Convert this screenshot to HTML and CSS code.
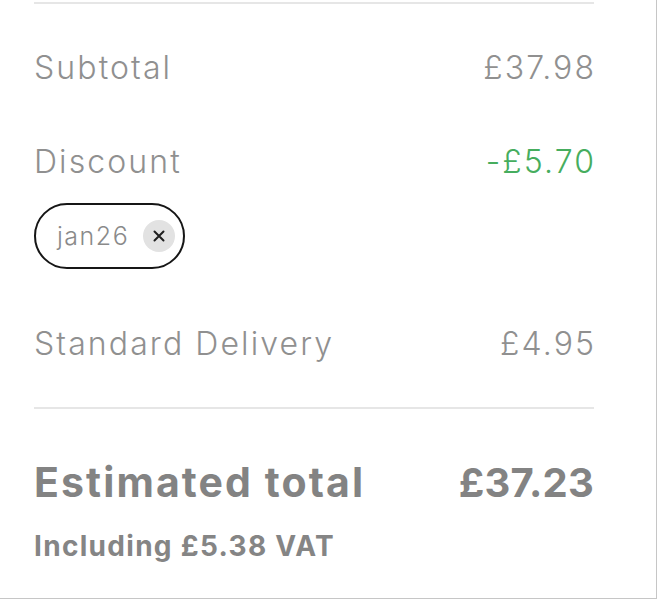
FILE: index.html
```html
<!DOCTYPE html>
<html lang="en">
<head>
<meta charset="utf-8">
<title>Order summary</title>
<link rel="stylesheet" href="styles.css">
</head>
<body>
<section class="panel">
  <div class="rule rule-top"></div>
  <div class="row row-subtotal">
    <span class="label">Subtotal</span>
    <span class="value">£37.98</span>
  </div>
  <div class="row row-discount">
    <span class="label">Discount</span>
    <span class="value value-green">-£5.70</span>
  </div>
  <div class="codes">
    <span class="pill">
      <span class="pill-text">jan26</span>
      <span class="pill-close" aria-label="Remove code">
        <svg width="12" height="12" viewBox="0 0 12 12"><path d="M1.5 1.5 L10.5 10.5 M10.5 1.5 L1.5 10.5" stroke="#1f1f1f" stroke-width="2" stroke-linecap="round"/></svg>
      </span>
    </span>
  </div>
  <div class="row row-delivery">
    <span class="label">Standard Delivery</span>
    <span class="value">£4.95</span>
  </div>
  <div class="rule rule-mid"></div>
  <div class="row row-total">
    <span class="total-label">Estimated total</span>
    <span class="total-value">£37.23</span>
  </div>
  <div class="vat">Including £5.38 VAT</div>
</section>
</body>
</html>
```
FILE: styles.css
```css
html, body {
  margin: 0;
  padding: 0;
  background: #ffffff;
}
body {
  font-family: Inter, "Noto Sans", "DejaVu Sans", sans-serif;
  color: #8e8e8e;
}
.panel {
  width: 560px;
  height: 598px;
  padding: 0 62px 0 34px;
  border-right: 1px solid #c6c6c6;
  border-bottom: 1px solid #c6c6c6;
  display: flex;
  flex-direction: column;
}
.rule {
  height: 2px;
  background: #e6e6e6;
  flex: none;
}
.rule-top { margin-top: 2px; }
.row {
  display: flex;
  justify-content: space-between;
  align-items: center;
  height: 40px;
  font-size: 32px;
  font-weight: 350;
  letter-spacing: 2.1px;
  color: #909090;
  flex: none;
}
.value { margin-right: -2.1px; }
.row-subtotal { margin-top: 43px; }
.row-discount { margin-top: 54px; }
.row-delivery { margin-top: 54px; }
.value-green { color: #46ad5e; }
.codes {
  margin-top: 22px;
  display: flex;
}
.pill {
  display: inline-flex;
  align-items: center;
  height: 62px;
  padding: 0 8px 0 21px;
  border: 2px solid #161616;
  border-radius: 34px;
}
.pill-text {
  font-size: 25px;
  font-weight: 350;
  letter-spacing: 1.5px;
  color: #8a8a8a;
  margin-right: 14px;
}
.pill-close {
  width: 32px;
  height: 32px;
  border-radius: 50%;
  background: #e2e2e2;
  display: flex;
  align-items: center;
  justify-content: center;
}
.rule-mid { margin-top: 44px; }
.row-total {
  margin-top: 48px;
  height: 50px;
  font-size: 41px;
  font-weight: 700;
  color: #838383;
  letter-spacing: 2.1px;
}
.total-value {
  font-size: 40px;
  letter-spacing: 0.2px;
}
.vat {
  margin-top: 21px;
  height: 36px;
  line-height: 36px;
  font-size: 28px;
  font-weight: 700;
  letter-spacing: 1.3px;
  color: #858585;
}
```
